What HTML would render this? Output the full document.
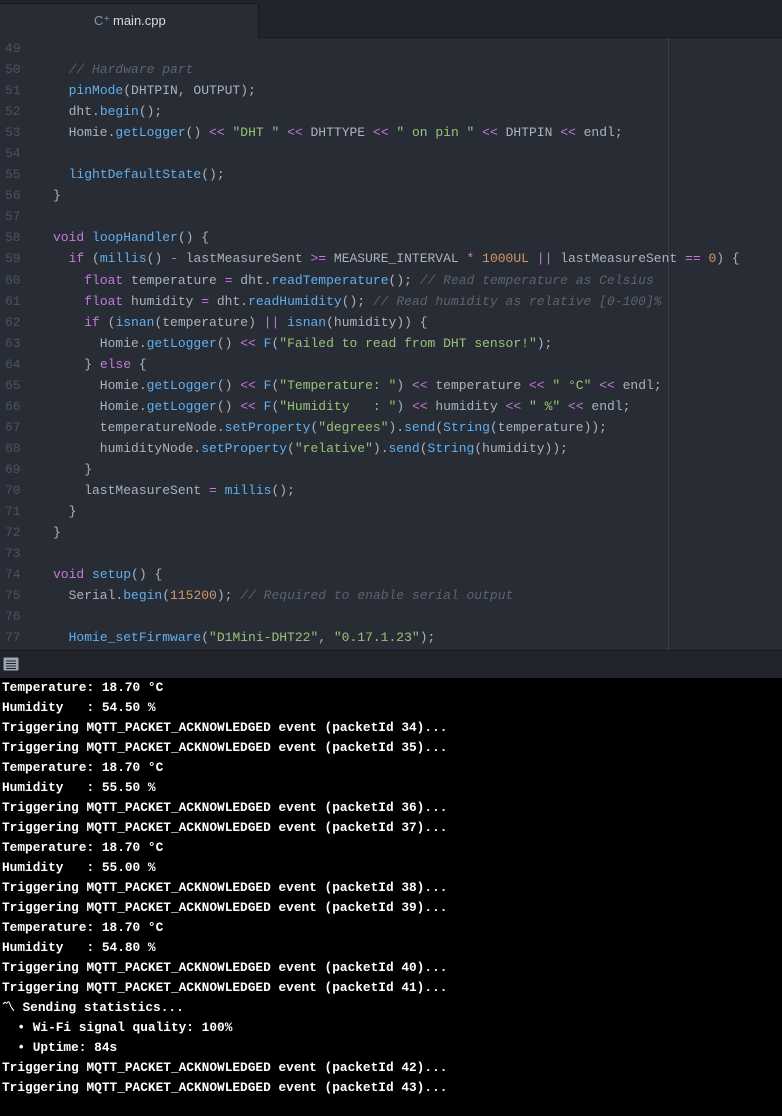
<!DOCTYPE html>
<html><head><meta charset="utf-8"><style>
*{margin:0;padding:0;box-sizing:border-box}
body{width:782px;height:1116px;overflow:hidden;background:#000;font-family:"Liberation Mono",monospace}
.tabs{position:absolute;left:0;top:0;width:782px;height:38px;background:#21252b;border-bottom:1px solid #181a1f}
.tab{position:absolute;left:0;top:3px;width:259px;height:36px;background:#282c34;border:1px solid #181a1f;border-bottom:none;border-left:none;border-radius:0 3px 0 0;color:#d7dae0;font-family:"Liberation Sans",sans-serif;font-size:13px;line-height:34px}
.tab span{position:absolute;left:113px}
.tab i{position:absolute;left:94px;top:0;font-style:normal;color:#8a93a3;font-size:13px}
.ed{position:absolute;left:0;top:38px;width:782px;height:612px;background:#282c34;overflow:hidden}
.guide{position:absolute;left:668px;top:0;width:1px;height:612px;background:#3a3f4b}
pre{font-family:"Liberation Mono",monospace;white-space:pre}
.code{position:absolute;left:0;top:0;font-size:13px;line-height:21.04px;color:#abb2bf}
.ln{display:inline-block;width:53px;padding-left:5px;color:#4b5263}
.c{color:#5c6370;font-style:italic}.f{color:#61afef}.s{color:#98c379}.o{color:#c678dd}.n{color:#d19a66}.k{color:#c678dd}
.ph{position:absolute;left:0;top:650px;width:782px;height:28px;background:#21252b;border-top:1px solid #181a1f}
.term{position:absolute;left:2px;top:678px;font-size:12.8px;line-height:20px;color:#fff;font-weight:bold}
</style></head><body>
<div class="tabs"><div class="tab"><i>C⁺</i><span>main.cpp</span></div></div>
<div class="ed"><div class="guide"></div><pre class="code"><span class="ln">49</span>
<span class="ln">50</span>  <span class="c">// Hardware part</span>
<span class="ln">51</span>  <span class="f">pinMode</span>(DHTPIN, OUTPUT);
<span class="ln">52</span>  dht.<span class="f">begin</span>();
<span class="ln">53</span>  Homie.<span class="f">getLogger</span>() <span class="o">&lt;&lt;</span> <span class="s">"DHT "</span> <span class="o">&lt;&lt;</span> DHTTYPE <span class="o">&lt;&lt;</span> <span class="s">" on pin "</span> <span class="o">&lt;&lt;</span> DHTPIN <span class="o">&lt;&lt;</span> endl;
<span class="ln">54</span>
<span class="ln">55</span>  <span class="f">lightDefaultState</span>();
<span class="ln">56</span>}
<span class="ln">57</span>
<span class="ln">58</span><span class="k">void</span> <span class="f">loopHandler</span>() {
<span class="ln">59</span>  <span class="k">if</span> (<span class="f">millis</span>() <span class="o">-</span> lastMeasureSent <span class="o">&gt;=</span> MEASURE_INTERVAL <span class="o">*</span> <span class="n">1000UL</span> <span class="o">||</span> lastMeasureSent <span class="o">==</span> <span class="n">0</span>) {
<span class="ln">60</span>    <span class="k">float</span> temperature <span class="o">=</span> dht.<span class="f">readTemperature</span>(); <span class="c">// Read temperature as Celsius</span>
<span class="ln">61</span>    <span class="k">float</span> humidity <span class="o">=</span> dht.<span class="f">readHumidity</span>(); <span class="c">// Read humidity as relative [0-100]%</span>
<span class="ln">62</span>    <span class="k">if</span> (<span class="f">isnan</span>(temperature) <span class="o">||</span> <span class="f">isnan</span>(humidity)) {
<span class="ln">63</span>      Homie.<span class="f">getLogger</span>() <span class="o">&lt;&lt;</span> <span class="f">F</span>(<span class="s">"Failed to read from DHT sensor!"</span>);
<span class="ln">64</span>    } <span class="k">else</span> {
<span class="ln">65</span>      Homie.<span class="f">getLogger</span>() <span class="o">&lt;&lt;</span> <span class="f">F</span>(<span class="s">"Temperature: "</span>) <span class="o">&lt;&lt;</span> temperature <span class="o">&lt;&lt;</span> <span class="s">" °C"</span> <span class="o">&lt;&lt;</span> endl;
<span class="ln">66</span>      Homie.<span class="f">getLogger</span>() <span class="o">&lt;&lt;</span> <span class="f">F</span>(<span class="s">"Humidity   : "</span>) <span class="o">&lt;&lt;</span> humidity <span class="o">&lt;&lt;</span> <span class="s">" %"</span> <span class="o">&lt;&lt;</span> endl;
<span class="ln">67</span>      temperatureNode.<span class="f">setProperty</span>(<span class="s">"degrees"</span>).<span class="f">send</span>(<span class="f">String</span>(temperature));
<span class="ln">68</span>      humidityNode.<span class="f">setProperty</span>(<span class="s">"relative"</span>).<span class="f">send</span>(<span class="f">String</span>(humidity));
<span class="ln">69</span>    }
<span class="ln">70</span>    lastMeasureSent <span class="o">=</span> <span class="f">millis</span>();
<span class="ln">71</span>  }
<span class="ln">72</span>}
<span class="ln">73</span>
<span class="ln">74</span><span class="k">void</span> <span class="f">setup</span>() {
<span class="ln">75</span>  Serial.<span class="f">begin</span>(<span class="n">115200</span>); <span class="c">// Required to enable serial output</span>
<span class="ln">76</span>
<span class="ln">77</span>  <span class="f">Homie_setFirmware</span>(<span class="s">"D1Mini-DHT22"</span>, <span class="s">"0.17.1.23"</span>);</pre></div>
<div class="ph"><svg style="position:absolute;left:3px;top:6px" width="16" height="14" viewBox="0 0 16 14"><rect x="0.5" y="0.5" width="15" height="13" rx="1" fill="#9da5b4"/><g stroke="#21252b" stroke-width="1"><line x1="3" y1="4" x2="13" y2="4"/><line x1="3" y1="6.5" x2="13" y2="6.5"/><line x1="3" y1="9" x2="13" y2="9"/><line x1="3" y1="11.5" x2="13" y2="11.5"/></g></svg></div>
<pre class="term">Temperature: 18.70 °C
Humidity   : 54.50 %
Triggering MQTT_PACKET_ACKNOWLEDGED event (packetId 34)...
Triggering MQTT_PACKET_ACKNOWLEDGED event (packetId 35)...
Temperature: 18.70 °C
Humidity   : 55.50 %
Triggering MQTT_PACKET_ACKNOWLEDGED event (packetId 36)...
Triggering MQTT_PACKET_ACKNOWLEDGED event (packetId 37)...
Temperature: 18.70 °C
Humidity   : 55.00 %
Triggering MQTT_PACKET_ACKNOWLEDGED event (packetId 38)...
Triggering MQTT_PACKET_ACKNOWLEDGED event (packetId 39)...
Temperature: 18.70 °C
Humidity   : 54.80 %
Triggering MQTT_PACKET_ACKNOWLEDGED event (packetId 40)...
Triggering MQTT_PACKET_ACKNOWLEDGED event (packetId 41)...
〽 Sending statistics...
  • Wi-Fi signal quality: 100%
  • Uptime: 84s
Triggering MQTT_PACKET_ACKNOWLEDGED event (packetId 42)...
Triggering MQTT_PACKET_ACKNOWLEDGED event (packetId 43)...</pre>
</body></html>
